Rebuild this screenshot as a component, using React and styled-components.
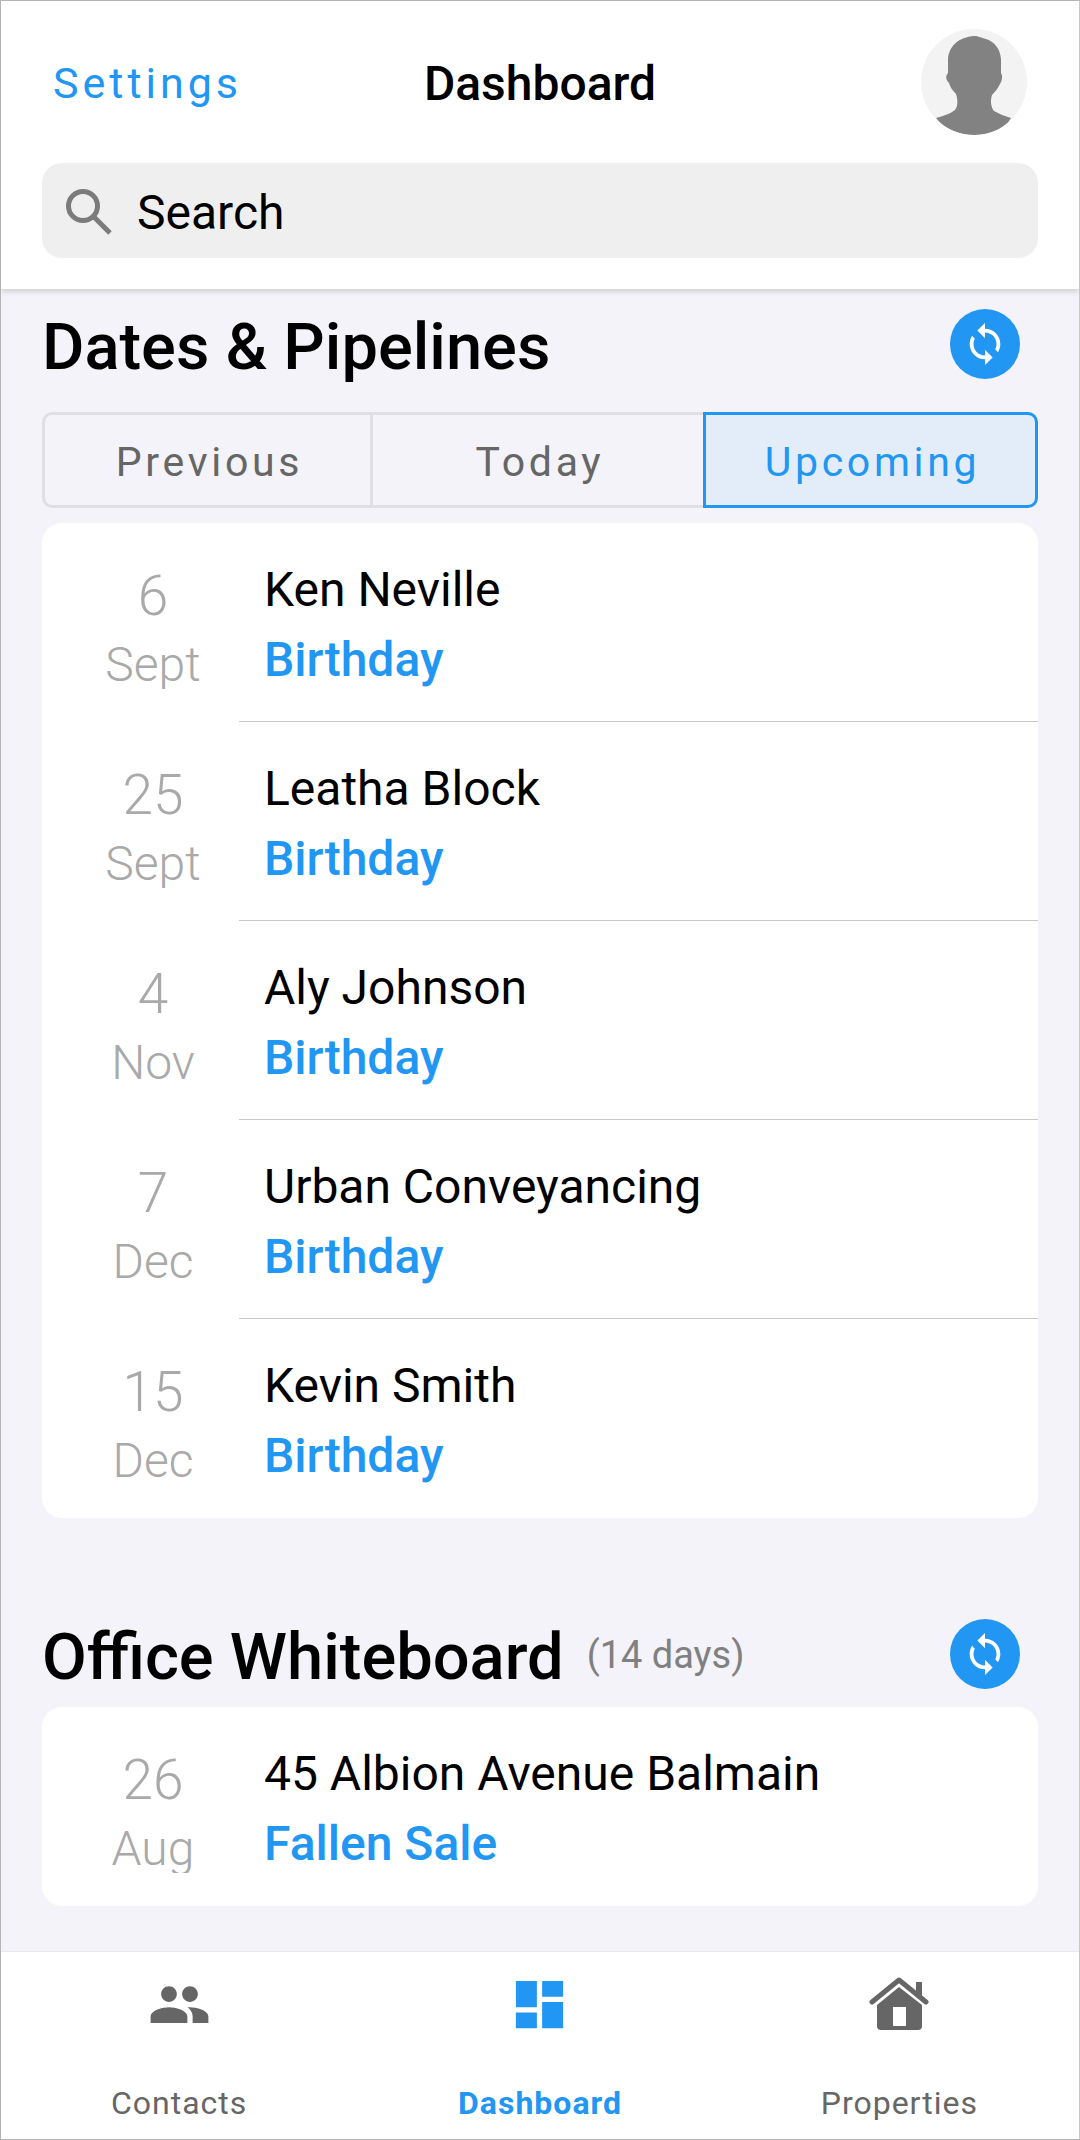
import React from 'react';
import styled, { createGlobalStyle } from 'styled-components';
import { MdPeople, MdDashboard } from 'react-icons/md';

const Global = createGlobalStyle`
  html, body { margin: 0; padding: 0; background: #fff; }
  body { font-family: Roboto, "Liberation Sans", sans-serif; }
`;
const blue = '#2196f3';

const Screen = styled.div`
  width: 1080px; height: 2140px; box-sizing: border-box;
  border: 1px solid #b4b4b4; border-right-color: #c8c8c8;
  background: #f3f3f9; display: flex; flex-direction: column; overflow: hidden;
`;
const Header = styled.header`
  height: 288px; flex: none; box-sizing: border-box; background: #fff;
  box-shadow: 0 2px 6px rgba(0,0,0,.18); position: relative; z-index: 1;
  padding: 28px 41px 0; display: flex; flex-direction: column; gap: 28px;
`;
const TopRow = styled.div`
  height: 106px; display: grid; grid-template-columns: 1fr auto 1fr; align-items: center;
`;
const SettingsLink = styled.span`
  color: ${blue}; font-size: 43px; letter-spacing: 4px; padding-left: 11px; padding-top: 2px;
`;
const PageTitle = styled.h1`
  margin: 0; font-size: 48px; font-weight: 500; color: #000; padding-top: 2px;
`;
const AvatarWrap = styled.div`
  justify-self: end; margin-right: 11px; width: 106px; height: 106px; border-radius: 50%;
  background: #f3f3f3; overflow: hidden;
  svg { display: block; }
`;
const SearchBox = styled.div`
  height: 95px; box-sizing: border-box; background: #efeff0; border-radius: 20px; display: flex; align-items: center;
  padding: 3px 0 0 24px; gap: 25px; font-size: 48px; color: #000;
`;
const Body = styled.main`
  flex: 1; padding: 0 41px; display: flex; flex-direction: column;
`;
const SectionHead = styled.div`
  display: flex; align-items: center; box-sizing: border-box; flex: none;
  height: ${p => p.$h}px; margin-top: ${p => p.$top || 0}px; padding-bottom: ${p => p.$pb || 0}px;
`;
const SectionTitle = styled.h2`
  margin: 0; font-size: 65px; font-weight: 500; color: #000; padding-top: 6px;
`;
const Note = styled.span`
  margin-left: 23px; font-size: 38px; color: #808080; padding-top: 2px;
`;
const Refresh = styled.div`
  margin-left: auto; margin-right: 18px; width: 70px; height: 70px; border-radius: 50%;
  background: ${blue}; display: flex; align-items: center; justify-content: center;
`;
const Tabs = styled.div`
  display: grid; grid-template-columns: 331px 330px 1fr; height: 96px;
`;
const Tab = styled.div`
  display: flex; align-items: center; justify-content: center; padding: 3px 0 0 4px;
  box-sizing: border-box; font-size: 41px; letter-spacing: 3.7px;
  color: ${p => p.$active ? blue : '#666'};
  background: ${p => p.$active ? '#e3edf9' : 'transparent'};
  border: 3px solid ${p => p.$active ? blue : '#e0e0e4'};
  border-left-width: ${p => p.$first || p.$active ? 3 : 0}px;
  border-right-width: ${p => p.$middle ? 0 : 3}px;
  border-radius: ${p => p.$first ? '10px 0 0 10px' : p.$active ? '0 10px 10px 0' : '0'};
`;
const Card = styled.section`
  background: #fff; border-radius: 20px; margin-top: ${p => p.$gap}px; overflow: hidden;
`;
const Row = styled.div`
  display: flex; height: 199px; box-sizing: border-box;
`;
const DateCol = styled.div`
  width: 197px; flex: none; box-sizing: border-box; padding: 40px 0 0 25px;
  display: flex; flex-direction: column; align-items: center;
  color: #a9a9a9; font-weight: 300;
`;
const Day = styled.span`
  font-size: 55px; line-height: 66px;
`;
const Month = styled.span`
  font-size: 48px; line-height: 54px; height: 51px; overflow: hidden; margin-top: 9px;
`;
const RowMain = styled.div`
  flex: 1; padding: 38px 0 0 25px; display: flex; flex-direction: column;
  border-bottom: ${p => p.$last ? 'none' : '1px solid #c8c8c8'};
`;
const Name = styled.div`
  font-size: 48px; line-height: 58px; color: #000;
`;
const Kind = styled.div`
  font-size: 48px; line-height: 58px; margin-top: 12px; color: ${blue}; font-weight: 500;
`;
const Nav = styled.nav`
  height: 188px; flex: none; background: #fff; display: grid; grid-template-columns: repeat(3, 1fr);
  border-top: 1px solid #e8e8ee; box-sizing: border-box;
`;
const NavItem = styled.div`
  display: flex; flex-direction: column; align-items: center; color: ${p => p.$active ? blue : '#666'};
  font-size: 32px; letter-spacing: 1px; font-weight: ${p => p.$active ? 700 : 400};
  padding-right: ${p => p.$inset || 0}px;
`;
const NavIcon = styled.div`
  height: 104px; margin-bottom: 28px; display: flex; align-items: center; justify-content: center;
  svg { display: block; }
`;

const Sync = () => (
  <svg width="46" height="46" viewBox="0 0 24 24" fill="#fff">
    <path d="M12 4V1L8 5l4 4V6c3.31 0 6 2.69 6 6 0 1.01-.25 1.97-.7 2.8l1.46 1.46C19.54 15.03 20 13.57 20 12c0-4.42-3.58-8-8-8zm0 14c-3.31 0-6-2.69-6-6 0-1.01.25-1.97.7-2.8L5.24 7.74C4.46 8.97 4 10.43 4 12c0 4.42 3.58 8 8 8v3l4-4-4-4v3z" />
  </svg>
);
const Avatar = () => (
  <svg width="106" height="106" viewBox="0 0 106 106" fill="#828282">
    <path d="M53 7 C58 7 60 9 65 10 C74 13 79 20 80 30 L80 44 C82 47 81 52 79 55 C77 59 74 63 71 66 C69 72 70 78 73 82 C78 85 84 87 90 89 C84 100 70 106 53 106 C37 106 22 99 15 89 C22 87 29 85 34 81 C37 77 37 71 35 65 C32 62 29 58 28 54 C25 51 24 47 27 44 L27 30 C28 17 38 8 53 7 Z" />
  </svg>
);
const SearchIcon = () => (
  <svg width="46" height="46" viewBox="0 0 46 46" fill="none" stroke="#7b7b7b" strokeWidth="5">
    <circle cx="17" cy="17" r="14.5" />
    <path d="M28 28 L44 44" />
  </svg>
);
const HouseIcon = () => (
  <svg width="60" height="54" viewBox="0 0 60 54" fill="#666">
    <path d="M3 25 L30 3 L57 25" fill="none" stroke="#666" strokeWidth="5" strokeLinecap="round" strokeLinejoin="round" />
    <path d="M47 5 H53 V19 L47 14 Z" />
    <path fillRule="evenodd" d="M30 10 L53 28 V49 Q53 53 49 53 H12 Q8 53 8 49 V28 Z M24 30 V49 H37 V30 Z" />
  </svg>
);

const upcoming = [
  ['6', 'Sept', 'Ken Neville'],
  ['25', 'Sept', 'Leatha Block'],
  ['4', 'Nov', 'Aly Johnson'],
  ['7', 'Dec', 'Urban Conveyancing'],
  ['15', 'Dec', 'Kevin Smith'],
];

export default function App() {
  return (
    <Screen>
      <Global />
      <Header>
        <TopRow>
          <SettingsLink>Settings</SettingsLink>
          <PageTitle>Dashboard</PageTitle>
          <AvatarWrap><Avatar /></AvatarWrap>
        </TopRow>
        <SearchBox><SearchIcon />Search</SearchBox>
      </Header>
      <Body>
        <SectionHead $h="123" $pb="14"><SectionTitle>Dates &amp; Pipelines</SectionTitle><Refresh><Sync /></Refresh></SectionHead>
        <Tabs>
          <Tab $first>Previous</Tab>
          <Tab $middle>Today</Tab>
          <Tab $active>Upcoming</Tab>
        </Tabs>
        <Card $gap={15}>
          {upcoming.map(([d, m, n], i) => (
            <Row key={n}>
              <DateCol><Day>{d}</Day><Month>{m}</Month></DateCol>
              <RowMain $last={i === upcoming.length - 1}>
                <Name>{n}</Name>
                <Kind>Birthday</Kind>
              </RowMain>
            </Row>
          ))}
        </Card>
        <SectionHead $h="107" $top="82">
          <SectionTitle>Office Whiteboard</SectionTitle><Note>(14 days)</Note><Refresh><Sync /></Refresh>
        </SectionHead>
        <Card $gap={0}>
          <Row>
            <DateCol><Day>26</Day><Month>Aug</Month></DateCol>
            <RowMain $last><Name>45 Albion Avenue Balmain</Name><Kind>Fallen Sale</Kind></RowMain>
          </Row>
        </Card>
      </Body>
      <Nav>
        <NavItem $inset={3}><NavIcon><MdPeople size={63} /></NavIcon>Contacts</NavItem>
        <NavItem $active><NavIcon><MdDashboard size={63} /></NavIcon>Dashboard</NavItem>
        <NavItem><NavIcon><HouseIcon /></NavIcon>Properties</NavItem>
      </Nav>
    </Screen>
  );
}
